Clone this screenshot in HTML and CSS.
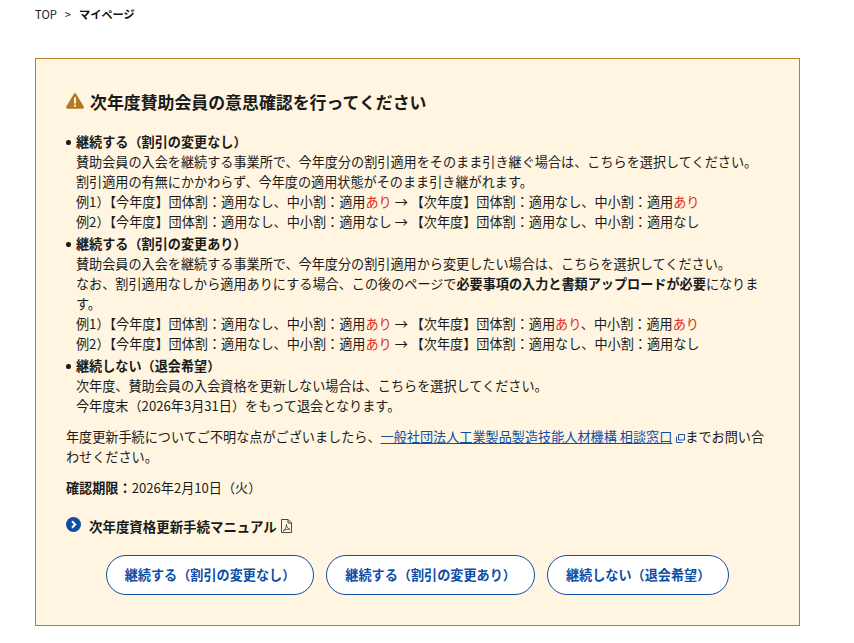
FILE: index.html
```html
<!DOCTYPE html>
<html lang="ja">
<head>
<meta charset="utf-8">
<title>マイページ</title>
<link rel="stylesheet" href="styles.css">
</head>
<body>
<nav class="crumbs"><a class="crumb-link">TOP</a><span class="crumb-sep">&gt;</span><strong class="crumb-current">マイページ</strong></nav>
<section class="notice">
  <h1 class="notice-title">
    <svg class="warn-icon" width="18" height="16" viewBox="0 0 18 16"><path d="M9 0.3c.5 0 .9.3 1.2.7l7.5 12.6c.5.9-.1 2.1-1.2 2.1H1.5C.4 15.700-.2 14.500.3 13.600L7.800 1C8.100.6 8.500.3 9 .3z" fill="#b27a1e"/><rect x="8" y="4.500" width="2" height="6" fill="#fff5e0"/><rect x="8" y="11.700" width="2" height="2" fill="#fff5e0"/></svg>
    <span>次年度賛助会員の意思確認を行ってください</span>
  </h1>
  <ul class="options">
    <li class="option">
      <strong>継続する（割引の変更なし）</strong>
      <p>賛助会員の入会を継続する事業所で、今年度分の割引適用をそのまま引き継ぐ場合は、こちらを選択してください。</p>
      <p>割引適用の有無にかかわらず、今年度の適用状態がそのまま引き継がれます。</p>
      <p>例1）【今年度】団体割：適用なし、中小割：適用<span class="red">あり</span> → 【次年度】団体割：適用なし、中小割：適用<span class="red">あり</span></p>
      <p>例2）【今年度】団体割：適用なし、中小割：適用なし → 【次年度】団体割：適用なし、中小割：適用なし</p>
    </li>
    <li class="option">
      <strong>継続する（割引の変更あり）</strong>
      <p>賛助会員の入会を継続する事業所で、今年度分の割引適用から変更したい場合は、こちらを選択してください。</p>
      <p>なお、割引適用なしから適用ありにする場合、この後のページで<strong>必要事項の入力と書類アップロードが必要</strong>になります。</p>
      <p>例1）【今年度】団体割：適用なし、中小割：適用<span class="red">あり</span> → 【次年度】団体割：適用<span class="red">あり</span>、中小割：適用<span class="red">あり</span></p>
      <p>例2）【今年度】団体割：適用なし、中小割：適用<span class="red">あり</span> → 【次年度】団体割：適用なし、中小割：適用なし</p>
    </li>
    <li class="option">
      <strong>継続しない（退会希望）</strong>
      <p>次年度、賛助会員の入会資格を更新しない場合は、こちらを選択してください。</p>
      <p>今年度末（2026年3月31日）をもって退会となります。</p>
    </li>
  </ul>
  <p class="para inquiry">年度更新手続についてご不明な点がございましたら、<a class="link">一般社団法人工業製品製造技能人材機構 相談窓口</a><svg class="ext-icon" width="9" height="9" viewBox="0 0 9 9"><path d="M2.500.5h6v5.500h-6z M.5 2.500v6h6" fill="none" stroke="#1a56a8" stroke-width="1"/></svg>までお問い合わせください。</p>
  <p class="para deadline"><strong>確認期限：</strong>2026年2月10日（火）</p>
  <div class="manual">
    <svg class="arrow-icon" width="15" height="15" viewBox="0 0 15 15"><circle cx="7.500" cy="7.500" r="7.500" fill="#0d4ea6"/><path d="M6 4.300l3.200 3.200L6 10.700" fill="none" stroke="#fff" stroke-width="2"/></svg>
    <strong class="manual-text">次年度資格更新手続マニュアル</strong>
    <svg class="pdf-icon" width="11" height="14" viewBox="0 0 11 14"><path d="M.5.5h6.500l3.500 3.500v9.500H.5z M7 .5v3.500h3.500" fill="none" stroke="#333" stroke-width=".9"/><path d="M2 12c2-1 3.500-4 3.500-6.500 0 2.500 1.500 4.500 3.500 4.800-2.500-.3-5 .3-7 1.700z" fill="none" stroke="#333" stroke-width=".8"/></svg>
  </div>
  <div class="actions">
    <button class="btn">継続する（割引の変更なし）</button>
    <button class="btn">継続する（割引の変更あり）</button>
    <button class="btn">継続しない（退会希望）</button>
  </div>
</section>
</body>
</html>
```
FILE: styles.css
```css
* { box-sizing: border-box; }
html, body { margin: 0; padding: 0; background: #fff; }
body {
  font-family: "Noto Sans CJK JP", "Noto Sans", sans-serif;
  font-size: 13.13px;
  line-height: 20px;
  color: #1a1a1a;
  padding: 0 54px 0 35px;
  height: 643px;
  overflow: hidden;
}
.crumbs { display: flex; align-items: center; height: 58px; padding-bottom: 30px; font-size: 11.2px; }
.crumb-sep { margin: 0 8px; }
.crumb-current { font-weight: 700; color: #111; }
.notice {
  width: 765px;
  height: 568px;
  border: 1px solid #b97f24;
  background: #fff5e0;
  padding: 30px 30px 0;
}
.notice-title {
  display: flex;
  align-items: center;
  gap: 6px;
  margin: 0 0 17px;
  font-size: 16.9px;
  line-height: 26px;
  font-weight: 700;
  color: #1a1a1a;
}
.warn-icon { flex: none; margin-bottom: 3px; }
.options { margin: 0 0 11px; padding: 0; list-style: none; }
.option { position: relative; padding-left: 10px; margin-bottom: 2px; }
.option::before {
  content: "";
  position: absolute;
  left: 0;
  top: 8px;
  width: 4.500px;
  height: 4.500px;
  border-radius: 50%;
  background: #1a1a1a;
}
.option p { margin: 0; }
.red { color: #e0301e; }
.para { margin: 0; }
.inquiry { margin-bottom: 11px; }
.link { color: #0d4ea6; text-decoration: underline; }
.ext-icon { margin: 0 0 0 4px; vertical-align: -1px; }
.deadline { margin-bottom: 18px; }
.manual { display: flex; align-items: center; gap: 8px; height: 20px; margin-bottom: 19px; }
.arrow-icon { flex: none; margin-bottom: 4px; }
.manual-text { margin-right: -4px; font-size: 13.45px; }
.pdf-icon { flex: none; }
.actions { display: flex; justify-content: center; gap: 12px; }
.btn {
  height: 40px;
  padding: 0 18px;
  border: 1px solid #0d4ea6;
  border-radius: 20px;
  background: #fff;
  color: #0d4ea6;
  font: 700 13.13px/20px "Noto Sans CJK JP", "Noto Sans", sans-serif;
  white-space: nowrap;
}
```
